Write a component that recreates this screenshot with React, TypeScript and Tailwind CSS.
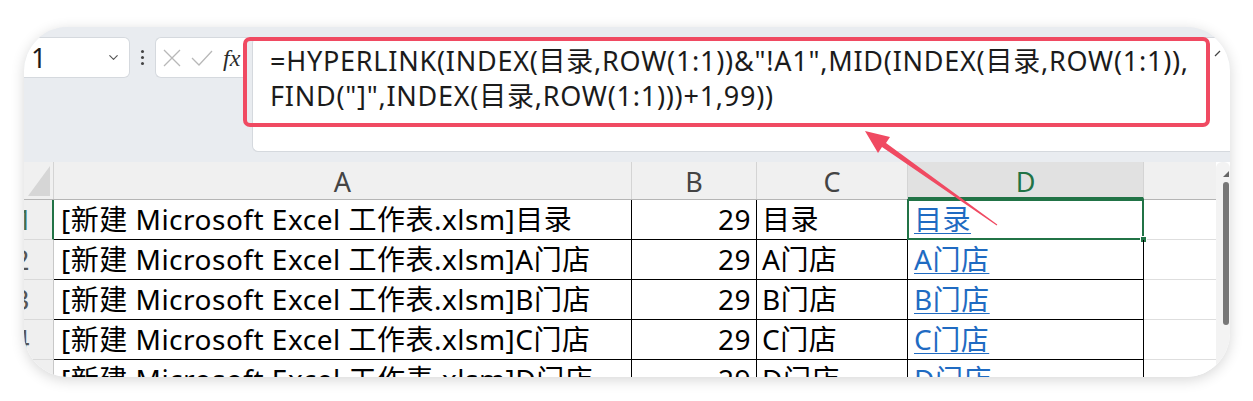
import { ChevronDown } from "lucide-react";

const font = "font-['Noto_Sans','Noto_Sans_CJK_SC',sans-serif]";

const rows = [
  { n: "1", a: "[新建 Microsoft Excel 工作表.xlsm]目录", b: 29, c: "目录" },
  { n: "2", a: "[新建 Microsoft Excel 工作表.xlsm]A门店", b: 29, c: "A门店" },
  { n: "3", a: "[新建 Microsoft Excel 工作表.xlsm]B门店", b: 29, c: "B门店" },
  { n: "4", a: "[新建 Microsoft Excel 工作表.xlsm]C门店", b: 29, c: "C门店" },
  { n: "5", a: "[新建 Microsoft Excel 工作表.xlsm]D门店", b: 29, c: "D门店" },
];

const FormulaBar = () => (
  <div className="flex h-[135px] shrink-0 bg-[#e9ecf0] pt-[10px]">
    <div className="flex h-[41px] w-[106px] items-center justify-between rounded-r-md border border-l-0 border-[#d5d9de] bg-white pl-[7px] pr-[8px]">
      <span className="text-[27px] leading-none text-[#1b1b1b]">1</span>
      <ChevronDown className="h-[15px] w-[15px] text-[#555]" strokeWidth={1.8} />
    </div>
    <div className="flex h-[41px] w-[25px] flex-col items-center justify-center gap-[3px]">
      <span className="h-[3px] w-[3px] rounded-full bg-[#444]" />
      <span className="h-[3px] w-[3px] rounded-full bg-[#444]" />
      <span className="h-[3px] w-[3px] rounded-full bg-[#444]" />
    </div>
    <div className="flex h-[41px] w-[92px] items-center rounded-l-md border border-r-0 border-[#d5d9de] bg-white pl-[7px]">
      <svg className="h-[18px] w-[18px]" viewBox="0 0 18 18">
        <path d="M1 1 L17 17 M17 1 L1 17" stroke="#b8b8b8" strokeWidth="1.3" fill="none" />
      </svg>
      <svg className="ml-[10px] h-[16px] w-[22px]" viewBox="0 0 22 16">
        <path d="M1 8 L8 15 L21 1" stroke="#b8b8b8" strokeWidth="1.3" fill="none" />
      </svg>
      <span className="ml-[10px] font-['Liberation_Serif',serif] text-[24px] italic leading-none text-[#2b2b2b]">
        fx
      </span>
    </div>
    <div className="relative ml-[5px] h-[115px] flex-1 rounded-l-md border border-r-0 border-[#d5d9de] bg-white pl-[17px] pt-[5px]">
      <div className="whitespace-nowrap text-[27px] leading-[35px] tracking-[0.75px] text-[#1b1b1b]">
        =HYPERLINK(INDEX(目录,ROW(1:1))&amp;"!A1",MID(INDEX(目录,ROW(1:1)),
        <br />
        FIND("]",INDEX(目录,ROW(1:1)))+1,99))
      </div>
      <svg className="absolute right-[8px] top-[12px] h-[8px] w-[8px]" viewBox="0 0 8 8">
        <path d="M1 6 L6 1" stroke="#444" strokeWidth="1.2" fill="none" />
      </svg>
    </div>
  </div>
);

const HeaderRow = () => (
  <div className="flex h-[38px] shrink-0 border-b border-[#b5b5b5] bg-[#f0f0f0] text-[27px] leading-[40px] text-[#444]">
    <div className="relative w-[30px] shrink-0 border-r border-[#d4d4d4]">
      <svg className="absolute bottom-[3px] right-[3px] h-[30px] w-[22px]" viewBox="0 0 22 30">
        <path d="M22 0 L22 30 L0 30 Z" fill="#d6d6d6" />
      </svg>
    </div>
    <div className="w-[578px] shrink-0 border-r border-[#d4d4d4] text-center">A</div>
    <div className="w-[125px] shrink-0 border-r border-[#d4d4d4] text-center">B</div>
    <div className="w-[151px] shrink-0 border-r border-[#d4d4d4] text-center">C</div>
    <div className="w-[236px] shrink-0 border-b-2 border-r border-[#217346] border-r-[#d4d4d4] bg-[#e1e1e1] text-center text-[#217346]">
      D
    </div>
    <div className="w-[72px] shrink-0" />
  </div>
);

const DataRow = ({ r, i }: { r: (typeof rows)[number]; i: number }) => (
  <div className="flex h-[40px] shrink-0 text-[28px] leading-[39px] tracking-[0.5px] text-black">
    <div
      className={`flex w-[30px] shrink-0 justify-end border-b border-[#d9d9d9] bg-[#efefef] ${
        i === 0
          ? "border-r-2 border-r-[#217346] pr-[19px] text-[#3d6e52]"
          : "border-r border-r-[#c8c8c8] pr-[23px] text-[#555]"
      }`}
    >
      <span className="shrink-0">{r.n}</span>
    </div>
    <div className="w-[578px] shrink-0 overflow-hidden whitespace-nowrap border-b border-r border-black pl-[7px]">
      {r.a}
    </div>
    <div className="w-[125px] shrink-0 border-b border-r border-black pr-[5px] text-right">{r.b}</div>
    <div className="w-[151px] shrink-0 whitespace-nowrap border-b border-r border-black pl-[5px]">{r.c}</div>
    <div className="relative w-[236px] shrink-0 whitespace-nowrap border-b border-r border-black pl-[6px] text-[#1f6bc2] underline decoration-1 underline-offset-[3px]">
      {r.c}
      {i === 0 && (
        <>
          <div className="absolute -left-px -top-px h-[41px] w-[237px] border-2 border-[#217346]" />
          <div className="absolute -bottom-[4px] -right-[4px] h-[7px] w-[7px] border border-white bg-[#217346]" />
        </>
      )}
    </div>
    <div className="w-[72px] shrink-0 border-b border-[#dedede] bg-white" />
  </div>
);

export default function App() {
  return (
    <div className={`relative h-[401px] w-[1253px] overflow-hidden bg-white pl-[24px] pt-[27px] ${font}`}>
      <div className="flex h-[350px] w-[1206px] flex-col overflow-hidden rounded-[44px] bg-[#e9ecf0] shadow-[0_3px_14px_rgba(0,0,0,0.16)]">
        <FormulaBar />
        <div className="flex flex-1 overflow-hidden bg-white">
          <div className="flex w-[1192px] shrink-0 flex-col">
            <HeaderRow />
            {rows.map((r, i) => (
              <DataRow key={r.n} r={r} i={i} />
            ))}
          </div>
          <div className="relative w-[14px] shrink-0 rounded-t-md bg-[#f3f3f3]">
            <svg className="absolute left-[6px] top-[8px] h-[8px] w-[8px]" viewBox="0 0 8 8">
              <path d="M1 7 L7 1 L7 7 Z" fill="#666" />
            </svg>
            <div className="absolute left-[7px] top-[20px] h-[143px] w-[6px] rounded-full bg-[#777]" />
          </div>
        </div>
      </div>

      {/* annotation */}
      <div className="pointer-events-none absolute left-[243px] top-[37px] h-[90px] w-[967px] rounded-[7px] border-4 border-[#f04a62]" />
      <svg className="pointer-events-none absolute left-0 top-0 h-[401px] w-[1253px]" viewBox="0 0 1253 401">
        <polygon
          points="865,131 890,137 886,143 997.3,224.6 996.7,225.4 882,147 878,153"
          fill="#f04a62"
        />
      </svg>
    </div>
  );
}
